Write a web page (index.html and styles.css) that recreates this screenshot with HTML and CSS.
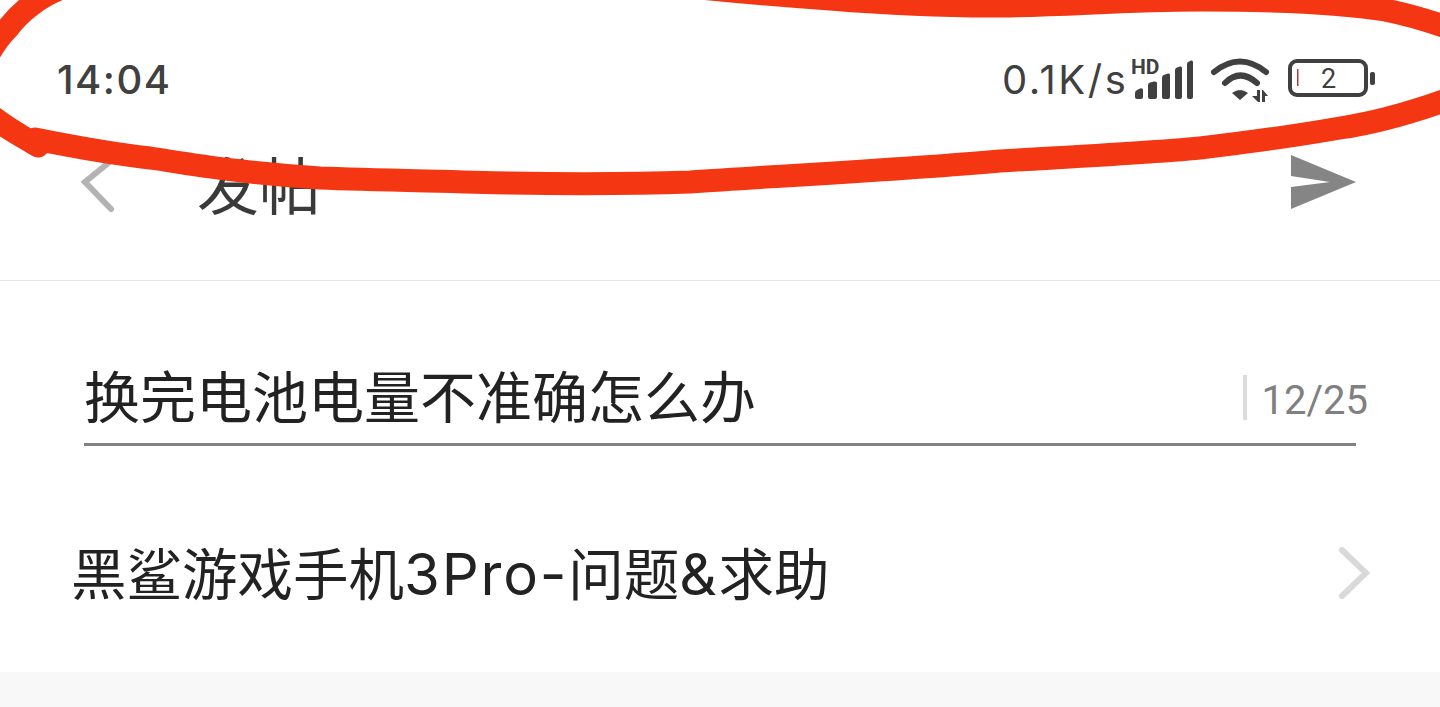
FILE: index.html
```html
<!DOCTYPE html>
<html lang="zh-CN">
<head>
<meta charset="utf-8">
<title>发帖</title>
<link rel="stylesheet" href="styles.css">
</head>
<body>
<div class="screen">
  <div class="status-bar">
    <span class="clock">14:04</span>
    <div class="status-icons">
      <span class="speed">0.1K/s</span>
      <svg class="signal" width="64" height="50" viewBox="0 -8 64 50">
        <text class="hd" x="-1" y="15">HD</text>
        <path d="M3 34 Q3 32 5 31 L8 29.500 Q11 28.500 11 31 V38 Q11 40 9 40 H5 Q3 40 3 38Z"/>
        <path d="M16 26 Q16 24 18 23.500 L22 22.500 Q25 22 25 24 V38 Q25 40 23 40 H18 Q16 40 16 38Z"/>
        <path d="M30 19 Q30 16 33 15.500 L36 14.500 Q38 14 38 16 V38 Q38 40 36 40 H32 Q30 40 30 38Z"/>
        <path d="M43 11 Q43 9 45 8.500 L48 7.500 Q50 7 50 9 V38 Q50 40 48 40 H45 Q43 40 43 38Z"/>
        <path d="M55 5 Q55 3 57 2.500 L59 1.500 Q61 1 61 3 V38 Q61 40 59 40 H57 Q55 40 55 38Z"/>
      </svg>
      <svg class="wifi" width="60" height="46" viewBox="0 0 60 46">
        <path class="wifi-arc" d="M4 14 Q30 -7 56 14"/>
        <path class="wifi-arc" d="M15 25 Q30 10 47 25"/>
        <path d="M22 35 Q30 29 38 35 L30 42Z"/>
        <path d="M42 38 H47 V32 H50 V44 H48Z"/>
        <path d="M52 32 H53 L58 38 H55 V44 H52Z"/>
      </svg>
      <svg class="battery" width="88" height="40" viewBox="0 0 88 40">
        <rect class="battery-body" x="2" y="2" width="76" height="34" rx="7"/>
        <rect class="battery-low" x="9" y="10" width="1.500" height="17"/>
        <text class="battery-num" x="33" y="29">2</text>
        <rect x="82" y="13" width="5" height="13" rx="2"/>
      </svg>
    </div>
  </div>

  <header class="nav">
    <svg class="back" width="40" height="60" viewBox="0 0 40 60">
      <path d="M34 5 L7 27 L33 54"/>
    </svg>
    <h1 class="nav-title">发帖</h1>
    <svg class="send" width="66" height="56" viewBox="0 0 66 56">
      <path d="M1 0 L66 27 L1 54 V32 L40 27 L1 21Z"/>
    </svg>
  </header>

  <main class="form">
    <div class="title-field">
      <span class="title-text">换完电池电量不准确怎么办</span>
      <span class="counter">12/25</span>
    </div>
    <div class="board-row">
      <span class="board-name">黑鲨游戏手机<span class="latin">3Pro-</span>问题<span class="latin">&amp;</span>求助</span>
      <svg class="chevron" width="32" height="52" viewBox="0 0 32 52">
        <path d="M4 3 L28 26 L4 49"/>
      </svg>
    </div>
  </main>
  <div class="footer-band"></div>

  <svg class="scribble" width="1440" height="707" viewBox="0 0 1440 707">
    <path d="M700 -12 C760 -6 800 -3 830 -1 C880 3 930 6 990 6 C1060 6 1120 0 1200 0 C1270 0 1340 3 1385 10 Q1420 17 1460 32"/>
    <path d="M62 -12 C40 -4 20 12 8 28 Q-6 42 -14 60"/>
    <path d="M-18 108 C0 125 20 135 38 146"/>
    <path d="M35 139 C70 146 105 153 150 158 C190 164 240 173 320 178 C370 180 440 181 510 183 C570 184 630 184 690 182 C790 175 900 170 1000 161 C1090 156 1160 152 1200 148 C1260 141 1300 135 1340 128 C1380 122 1420 110 1460 95"/>
  </svg>
</div>
</body>
</html>
```
FILE: styles.css
```css
html, body {
  margin: 0;
  padding: 0;
  height: 100%;
  background: #fff;
  overflow: hidden;
}

.screen {
  position: relative;
  width: 1440px;
  height: 707px;
  display: flex;
  flex-direction: column;
  font-family: "Noto Sans CJK SC", Roboto, sans-serif;
  background: #fff;
  overflow: hidden;
}

.status-bar {
  height: 130px;
  flex: none;
  box-sizing: border-box;
  display: flex;
  justify-content: space-between;
  padding: 50px 64px 0 57px;
  align-items: flex-start;
  color: #404040;
}

.clock {
  font-family: Inter, sans-serif;
  font-weight: 500;
  font-size: 40px;
  line-height: 60px;
  letter-spacing: 1.500px;
}

.status-icons {
  display: flex;
  align-items: flex-start;
}

.speed {
  font-family: Inter, sans-serif;
  font-size: 40px;
  line-height: 60px;
  letter-spacing: 2.600px;
  width: 130px;
  margin-left: -1px;
}

.status-icons svg {
  fill: #404040;
  flex: none;
}

.signal {
  margin-top: 1px;
}

.wifi {
  margin: 8px 0 0 14px;
}

.battery {
  margin: 9px 0 0 18px;
}

.hd {
  font-family: Roboto, sans-serif;
  font-size: 21px;
  font-weight: 700;
}

.wifi-arc {
  fill: none;
  stroke: #404040;
  stroke-width: 6;
  stroke-linecap: round;
}

.battery-body {
  fill: none;
  stroke: #404040;
  stroke-width: 4;
}

.battery-low {
  fill: #b53a3a;
}

.battery-num {
  font-family: Roboto, sans-serif;
  font-size: 27px;
  fill: #404040;
}

.nav {
  height: 151px;
  flex: none;
  box-sizing: border-box;
  border-bottom: 1px solid #e6e6e6;
  display: flex;
  align-items: flex-start;
  padding: 25px 84px 0 78px;
}

.back {
  flex: none;
}

.back path {
  fill: none;
  stroke: #b3b3b3;
  stroke-width: 6;
  stroke-linecap: round;
}

.nav-title {
  flex: 1;
  margin: -2px 0 0 79px;
  font-size: 62px;
  font-weight: 400;
  line-height: 60px;
  color: #3a3a3a;
}

.send {
  flex: none;
  fill: #858585;
}

.form {
  flex: 1;
  display: flex;
  flex-direction: column;
}

.title-field {
  margin: 80px 84px 0;
  height: 85px;
  box-sizing: border-box;
  border-bottom: 3px solid #808080;
  display: flex;
  justify-content: space-between;
  align-items: flex-start;
}

.title-text {
  font-size: 56px;
  line-height: 66px;
  color: #222;
}

.counter {
  font-family: Roboto, sans-serif;
  font-size: 40px;
  line-height: 52px;
  margin: 14px -12px 0 0;
  padding-left: 15px;
  color: #808080;
  border-left: 4px solid #dcdcdc;
  height: 45px;
}

.board-row {
  display: flex;
  justify-content: space-between;
  align-items: center;
  padding: 0 70px 0 71px;
  margin-top: 89px;
}

.board-name {
  font-size: 55.500px;
  line-height: 72px;
  color: #222;
}

.latin {
  font-family: Inter, sans-serif;
  font-size: 58px;
  letter-spacing: 1.800px;
}

.chevron path {
  fill: none;
  stroke: #d9d9d9;
  stroke-width: 6;
  stroke-linecap: round;
}

.footer-band {
  height: 35px;
  flex: none;
  background: #f8f8f8;
}

.scribble {
  position: absolute;
  top: 0;
  left: 0;
  pointer-events: none;
}

.scribble path {
  fill: none;
  stroke: #f43712;
  stroke-width: 23;
  stroke-linecap: round;
  stroke-linejoin: round;
}
```
